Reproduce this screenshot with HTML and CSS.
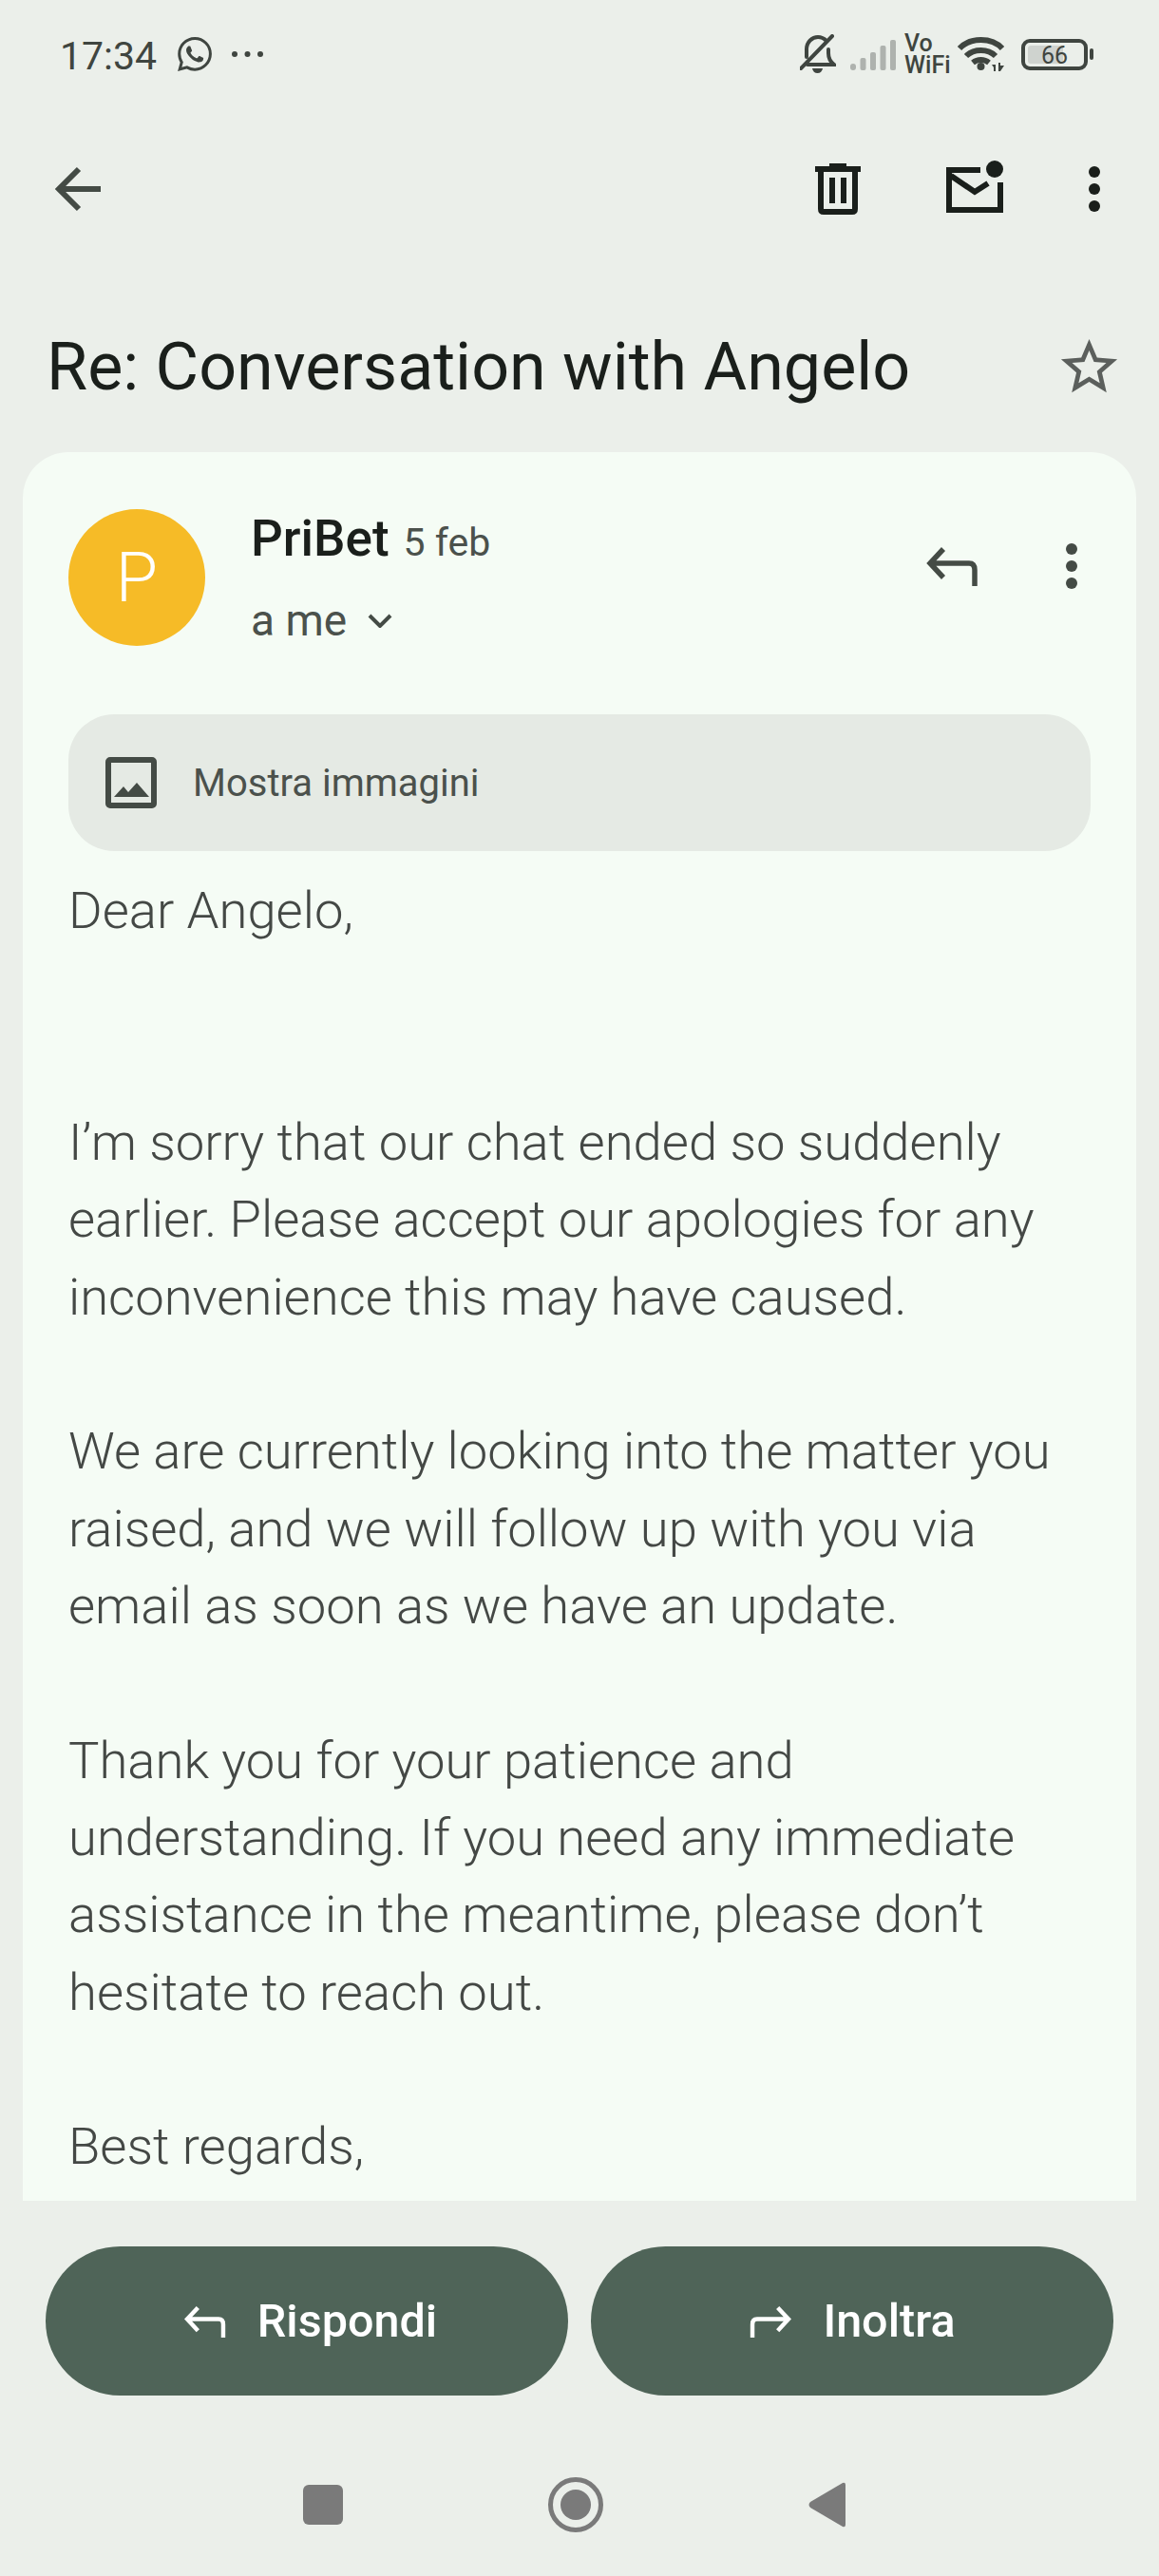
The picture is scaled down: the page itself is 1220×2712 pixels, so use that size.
FILE: index.html
```html
<!DOCTYPE html>
<html lang="it">
<head>
    <meta charset="utf-8">
    <title>Re: Conversation with Angelo</title>
    <link rel="stylesheet" href="styles.css">
</head>
<body>

<!-- status bar -->
<header class="status">
    <span class="clock">17:34</span>
    <svg class="ic-whatsapp" viewBox="0 0 24 24"><path fill="#3f4540" d="M17.472 14.382c-.297-.149-1.758-.867-2.03-.967-.273-.099-.471-.148-.67.15-.197.297-.767.966-.94 1.164-.173.199-.347.223-.644.075-.297-.15-1.255-.463-2.39-1.475-.883-.788-1.48-1.761-1.653-2.059-.173-.297-.018-.458.13-.606.134-.133.298-.347.446-.52.149-.174.198-.298.298-.497.099-.198.05-.371-.025-.52-.075-.149-.669-1.612-.916-2.207-.242-.579-.487-.5-.669-.51-.173-.008-.371-.01-.57-.01-.198 0-.52.074-.792.372-.272.297-1.04 1.016-1.04 2.479 0 1.462 1.065 2.875 1.213 3.074.149.198 2.096 3.2 5.077 4.487.709.306 1.262.489 1.694.625.712.227 1.36.195 1.871.118.571-.085 1.758-.719 2.006-1.413.248-.694.248-1.289.173-1.413-.074-.124-.272-.198-.57-.347m-5.421 7.403h-.004a9.87 9.87 0 01-5.031-1.378l-.361-.214-3.741.982.998-3.648-.235-.374a9.86 9.86 0 01-1.51-5.26c.001-5.45 4.436-9.884 9.888-9.884 2.64 0 5.122 1.03 6.988 2.898a9.825 9.825 0 012.893 6.994c-.003 5.45-4.437 9.884-9.885 9.884m8.413-18.297A11.815 11.815 0 0012.05 0C5.495 0 .16 5.335.157 11.892c0 2.096.547 4.142 1.588 5.945L.057 24l6.305-1.654a11.882 11.882 0 005.683 1.448h.005c6.554 0 11.89-5.335 11.893-11.893a11.821 11.821 0 00-3.48-8.413Z"/></svg>
    <svg class="ic-more" viewBox="0 0 33 6"><circle cx="3" cy="3" r="3"/><circle cx="16.5" cy="3" r="3"/><circle cx="30" cy="3" r="3"/></svg>

    <div class="status-right">
        <svg class="ic-bell" viewBox="0 0 38 42"><path d="M7 24V16C7 8 13 3 19 3C23 3 26 5 28 7M30 16V20C30 25 32 29 36 32H8M1 36L34 2"/><path class="solid" d="M13 36H24Q23 41 18.500 41Q14 41 13 36Z"/></svg>
        <svg class="ic-signal" viewBox="0 0 48 32"><rect x="0" y="25" width="6" height="7" rx="3"/><rect x="10.500" y="19" width="6" height="13" rx="2"/><rect x="21" y="13" width="6" height="19" rx="2"/><rect x="31.500" y="6" width="6" height="26" rx="2"/><rect x="42" y="0" width="6" height="32" rx="2"/></svg>
        <div class="vowifi">Vo WiFi</div>
        <svg class="ic-wifi" viewBox="0 0 52 36"><path d="M3 12C14 0 37 0 48 12M10 20C18 12 33 12 41 20M17 27C22 23 29 23 34 27"/><circle class="solid" cx="25.500" cy="31" r="4"/><path class="solid" d="M37 29l4 0v7h-2v-4zM44 36l0-9h2v3l4 0-4 6z"/></svg>
        <div class="battery"><span class="battery-level">66</span></div>
        <div class="battery-nub"></div>
    </div>
</header>

<!-- toolbar -->
<nav class="toolbar">
    <svg class="ic-back" viewBox="0 0 48 48"><path d="M48 24H6M25 3L4 24L25 45"/></svg>
    <svg class="ic-trash" viewBox="0 0 48 54"><rect y="3" width="48" height="6"/><rect x="15" width="18" height="4"/><rect x="15" y="15" width="6" height="27"/><rect x="27" y="15" width="6" height="27"/><path class="line" d="M6 8V48Q6 51 9 51H39Q42 51 42 48V8"/></svg>
    <svg class="ic-mail" viewBox="0 0 60 55"><path class="line" d="M36 10H3V52H57V23"/><path class="line" d="M5 16L30 33L44 24"/><circle cx="51" cy="9" r="9"/></svg>
    <svg class="ic-kebab dark" viewBox="0 0 12 48"><circle cx="6" cy="6" r="6"/><circle cx="6" cy="24" r="6"/><circle cx="6" cy="42" r="6"/></svg>
</nav>

<!-- subject -->
<div class="subject">
    <h1>Re: Conversation with Angelo</h1>
    <svg class="ic-star" viewBox="0 0 24 24"><path d="M22 9.240l-7.190-.620L12 2 9.190 8.630 2 9.240l5.460 4.730L5.820 21 12 17.270 18.180 21l-1.630-7.030L22 9.240zM12 15.400l-3.760 2.270 1-4.280-3.320-2.880 4.380-.380L12 6.100l1.710 4.040 4.380.380-3.320 2.880 1 4.280L12 15.400z"/></svg>
</div>

<!-- the message -->
<main class="card">
    <div class="msg-head">
        <div class="avatar">P</div>
        <div class="sender">
            <div class="sender-top"><span class="sender-name">PriBet</span><span class="msg-date">5 feb</span></div>
            <div class="sender-to">a me
                <svg class="ic-chevron" viewBox="0 0 26 15"><path d="M2 2L13 13L24 2"/></svg>
            </div>
        </div>
        <svg class="ic-reply" viewBox="0 0 57 44"><path d="M19 4L5 19L19 34M5 19H46Q52 19 52 26V43"/></svg>
        <svg class="ic-kebab" viewBox="0 0 12 48"><circle cx="6" cy="6" r="6"/><circle cx="6" cy="24" r="6"/><circle cx="6" cy="42" r="6"/></svg>
    </div>

    <div class="show-images">
        <svg class="ic-image" viewBox="0 0 54 54"><rect x="3" y="3" width="48" height="48" rx="2"/><path class="solid" d="M9 42L19 31L24 37L33 27L46 42Z"/></svg>
        <span>Mostra immagini</span>
    </div>

    <div class="msg-body">
        <p class="greeting">Dear Angelo,</p>
        <p>I’m sorry that our chat ended so suddenly earlier. Please accept our apologies for any inconvenience this may have caused.</p>
        <p>We are currently looking into the matter you raised, and we will follow up with you via email as soon as we have an update.</p>
        <p>Thank you for your patience and understanding. If you need any immediate assistance in the meantime, please don’t hesitate to reach out.</p>
        <p>Best regards,</p>
    </div>
</main>

<!-- reply / forward -->
<div class="actions">
    <button class="action">
        <svg class="ic-action" viewBox="0 0 57 44"><path d="M19 4L5 19L19 34M5 19H46Q52 19 52 26V43"/></svg>
        Rispondi
    </button>
    <button class="action">
        <svg class="ic-action flip" viewBox="0 0 57 44"><path d="M19 4L5 19L19 34M5 19H46Q52 19 52 26V43"/></svg>
        Inoltra
    </button>
</div>

<!-- android navigation -->
<footer class="sysnav">
    <div class="nav-square"></div>
    <div class="nav-circle"><div class="nav-dot"></div></div>
    <svg class="nav-back" viewBox="0 0 39 48"><path d="M36 1L2 21Q-1 24 2 27L36 47Q39 48 39 45V3Q39 0 36 1Z"/></svg>
</footer>

</body>
</html>
```

FILE: styles.css
```css
* { box-sizing: border-box; }

body {
    margin: 0;
    width: 1220px;
    height: 2712px;
    overflow: hidden;
    background: #ebefea;
    font-family: Roboto, "Liberation Sans", sans-serif;
    color: #1a1f1b;
}

svg { display: block; flex: none; }

/* status bar */
.status {
    height: 112px;
    padding: 2px 69px 0 63px;
    display: flex;
    align-items: center;
    color: #3f4540;
}
.clock { font-size: 41px; line-height: 40px; margin-top: 4px; }
.ic-whatsapp { width: 36px; height: 36px; margin-left: 22px; }
.ic-more { width: 33px; height: 6px; margin-left: 21px; fill: #3f4540; }

.status-right {
    margin-left: auto;
    display: flex;
    align-items: center;
}
.ic-bell { width: 38px; height: 42px; fill: none; stroke: #3f4540; stroke-width: 4; stroke-linecap: round; }
.ic-bell .solid { fill: #3f4540; stroke: none; }
.ic-signal { width: 48px; height: 32px; margin: 0 0 -1px 15px; fill: #aeb2ae; }
.vowifi {
    width: 46px;
    margin-left: 9px;
    font-size: 25px;
    line-height: 23px;
    font-weight: 500;
}
.ic-wifi { width: 52px; height: 36px; margin-left: 9px; fill: none; stroke: #3f4540; stroke-width: 6; }
.ic-wifi .solid { fill: #3f4540; stroke: none; }
.battery {
    width: 70px;
    height: 33px;
    margin-left: 16px;
    border: 4px solid #3f4540;
    border-radius: 9px;
    padding: 3px;
}
.battery-level {
    display: block;
    height: 100%;
    font-size: 25px;
    line-height: 22px;
    text-align: center;
    background: linear-gradient(to right, #cfd3cf 66%, transparent 66%);
    border-radius: 3px;
}
.battery-nub { width: 4px; height: 12px; margin-left: 2px; background: #3f4540; border-radius: 2px; }

/* toolbar */
.toolbar {
    height: 174px;
    padding: 0 62px 0 58px;
    display: flex;
    align-items: center;
}
.ic-back { width: 48px; height: 48px; fill: none; stroke: #444b45; stroke-width: 6; }
.ic-trash { width: 48px; height: 54px; margin-left: auto; fill: #1a1f1b; }
.ic-trash .line, .ic-mail .line { fill: none; stroke: #1a1f1b; stroke-width: 6; }
.ic-mail { width: 60px; height: 55px; margin: -6px 0 0 90px; fill: #1a1f1b; }
.ic-kebab { width: 12px; height: 48px; fill: #444b45; }
.ic-kebab.dark { margin-left: 90px; fill: #1a1f1b; }

/* subject line */
.subject {
    height: 190px;
    padding: 10px 38px 0 49px;
    display: flex;
    align-items: center;
    justify-content: space-between;
}
h1 { margin: 0; font-size: 70px; font-weight: 400; line-height: 84px; }
.ic-star { width: 71px; height: 71px; fill: #5b5f5c; }

/* message card */
.card {
    height: 1841px;
    margin: 0 24px;
    padding: 60px 48px 0;
    background: #f5fcf5;
    border-radius: 48px 48px 0 0;
    overflow: hidden;
}
.msg-head { height: 144px; display: flex; align-items: flex-start; }
.avatar {
    width: 144px;
    height: 144px;
    border-radius: 50%;
    background: #f6bb27;
    color: #fff;
    font-size: 72px;
    font-weight: 300;
    display: flex;
    align-items: center;
    justify-content: center;
}
.sender { margin-left: 48px; flex: 1; }
.sender-top { display: flex; align-items: baseline; gap: 15px; height: 62px; }
.sender-name { font-size: 53px; font-weight: 500; line-height: 62px; }
.msg-date { font-size: 41px; color: #4b514c; }
.sender-to {
    margin-top: 27px;
    display: flex;
    align-items: center;
    gap: 22px;
    font-size: 46px;
    line-height: 56px;
    color: #4b514c;
}
.ic-chevron { width: 26px; height: 15px; fill: none; stroke: #444b45; stroke-width: 4; }
.ic-reply { width: 57px; height: 44px; margin-top: 38px; fill: none; stroke: #444b45; stroke-width: 5.500; }
.msg-head .ic-kebab { margin: 36px 14px 0 91px; }

.show-images {
    height: 144px;
    margin-top: 72px;
    padding-left: 39px;
    display: flex;
    align-items: center;
    gap: 38px;
    background: #e5eae4;
    border-radius: 48px;
    font-size: 40px;
    color: #4b514c;
}
.ic-image { width: 54px; height: 54px; fill: none; stroke: #444b45; stroke-width: 6; }
.ic-image .solid { fill: #444b45; stroke: none; }

.msg-body {
    margin-top: 22px;
    font-size: 54.400px;
    line-height: 81.330px;
    font-weight: 300;
    color: #444845;
}
.msg-body p { margin: 0 0 81.330px; }
.msg-body .greeting { margin-bottom: 162.660px; }

/* reply and forward */
.actions { margin-top: 48px; padding: 0 48px; display: flex; gap: 24px; }
.action {
    flex: 0 0 550px;
    height: 157px;
    padding: 0;
    border: 0;
    border-radius: 79px;
    background: #4f6458;
    color: #fff;
    font-family: inherit;
    font-size: 48.500px;
    font-weight: 500;
    display: flex;
    align-items: center;
    justify-content: center;
    gap: 32px;
}
.action:first-child { padding-left: 7px; }
.ic-action { width: 46px; height: 36px; fill: none; stroke: #fff; stroke-width: 5.500; }
.flip { transform: scaleX(-1); }

/* android navigation */
.sysnav {
    height: 190px;
    padding: 40px 0 0 319px;
    display: flex;
    align-items: center;
    gap: 216px;
}
.nav-square { width: 42px; height: 42px; background: #7a7a7a; border-radius: 6px; }
.nav-circle {
    width: 58px;
    height: 58px;
    border: 5px solid #7a7a7a;
    border-radius: 50%;
    display: flex;
    align-items: center;
    justify-content: center;
}
.nav-dot { width: 32px; height: 32px; border-radius: 50%; background: #7a7a7a; }
.nav-back { width: 39px; height: 48px; fill: #7a7a7a; }
```
